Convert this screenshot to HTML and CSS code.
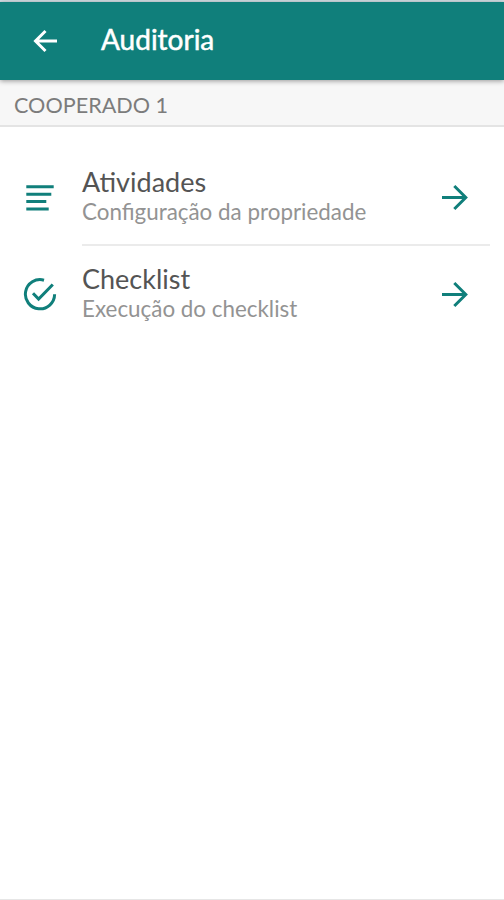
FILE: index.html
```html
<!DOCTYPE html>
<html lang="pt-BR">
<head>
  <meta charset="UTF-8" />
  <meta name="viewport" content="width=device-width, initial-scale=1.0"/>
  <title>Auditoria</title>
  <link rel="stylesheet" href="styles.css">
</head>
<body>
  <div class="app">
    <header class="toolbar">
      <svg class="back-icon" viewBox="0 0 28 28">
        <path d="M26 14H4M14.5 4L4.5 14l10 10" />
      </svg>
      <h1 class="toolbar-title">Auditoria</h1>
    </header>

    <div class="list-header">COOPERADO 1</div>

    <main class="list">
      <div class="item">
        <svg class="item-icon" viewBox="0 0 36 36">
          <path d="M4.3 6.8h27.4M4.3 14.2h25M4.3 21.6h20M4.3 29h22.4" />
        </svg>
        <div class="item-inner">
          <div class="item-text">
            <h2>Atividades</h2>
            <p>Configuração da propriedade</p>
          </div>
          <svg class="arrow-icon" viewBox="0 0 30 30">
            <path d="M3 15.5h24M15.3 4l11.5 11.5L15.3 27" />
          </svg>
        </div>
      </div>

      <div class="item">
        <svg class="item-icon" viewBox="0 0 36 36">
          <path d="M22 3.2A14.6 14.6 0 1 0 32.6 17.3M11 16.3l5.6 5.8L30.8 7.5" />
        </svg>
        <div class="item-inner last">
          <div class="item-text">
            <h2>Checklist</h2>
            <p>Execução do checklist</p>
          </div>
          <svg class="arrow-icon" viewBox="0 0 30 30">
            <path d="M3 15.5h24M15.3 4l11.5 11.5L15.3 27" />
          </svg>
        </div>
      </div>
    </main>
  </div>
</body>
</html>
```
FILE: styles.css
```css
:root {
  --primary: #107f7b;
  --line: #e4e4e4;
}

* {
  box-sizing: border-box;
}

body {
  margin: 0;
  font-family: Lato, "Liberation Sans", sans-serif;
  background: #fff;
}

h1, h2, p {
  margin: 0;
  font-weight: normal;
}

svg {
  display: block;
  flex: none;
  fill: none;
  stroke: var(--primary);
  stroke-width: 3;
}

.app {
  display: flex;
  flex-direction: column;
  height: 900px;
  border-top: 2px solid #d3dfe5;
  border-bottom: 1px solid #e6e6e6;
}

.toolbar {
  display: flex;
  align-items: center;
  gap: 42px;
  height: 78px;
  padding-left: 31px;
  background: var(--primary);
  box-shadow: 0 1px 5px rgba(0, 0, 0, 0.4);
  z-index: 1;
}

.back-icon {
  width: 28px;
  height: 28px;
  stroke: #fff;
}

.toolbar-title {
  padding-bottom: 4px;
  font-size: 28px;
  line-height: 34px;
  color: #fff;
  -webkit-text-stroke: 0.5px #fff;
}

.list-header {
  height: 47px;
  padding-left: 14px;
  font-size: 21.6px;
  line-height: 50px;
  color: #7c7c7c;
  background: #f7f7f7;
  border-bottom: 2px solid var(--line);
}

.list {
  flex: 1;
  padding-top: 22px;
}

.item {
  display: flex;
  align-items: center;
  padding-left: 22px;
}

.item-icon {
  width: 36px;
  height: 36px;
}

.item-inner {
  display: flex;
  flex: 1;
  align-items: center;
  justify-content: space-between;
  height: 97px;
  margin-left: 24px;
  margin-right: 14px;
  padding-right: 21px;
  border-bottom: 2px solid #ebebeb;
}

.item-inner.last {
  border-bottom-color: transparent;
}

.item-text h2 {
  font-size: 27px;
  line-height: 30px;
  color: #545454;
}

.item-text p {
  font-size: 22.4px;
  line-height: 29px;
  color: #939393;
}

.arrow-icon {
  width: 30px;
  height: 30px;
}
```
